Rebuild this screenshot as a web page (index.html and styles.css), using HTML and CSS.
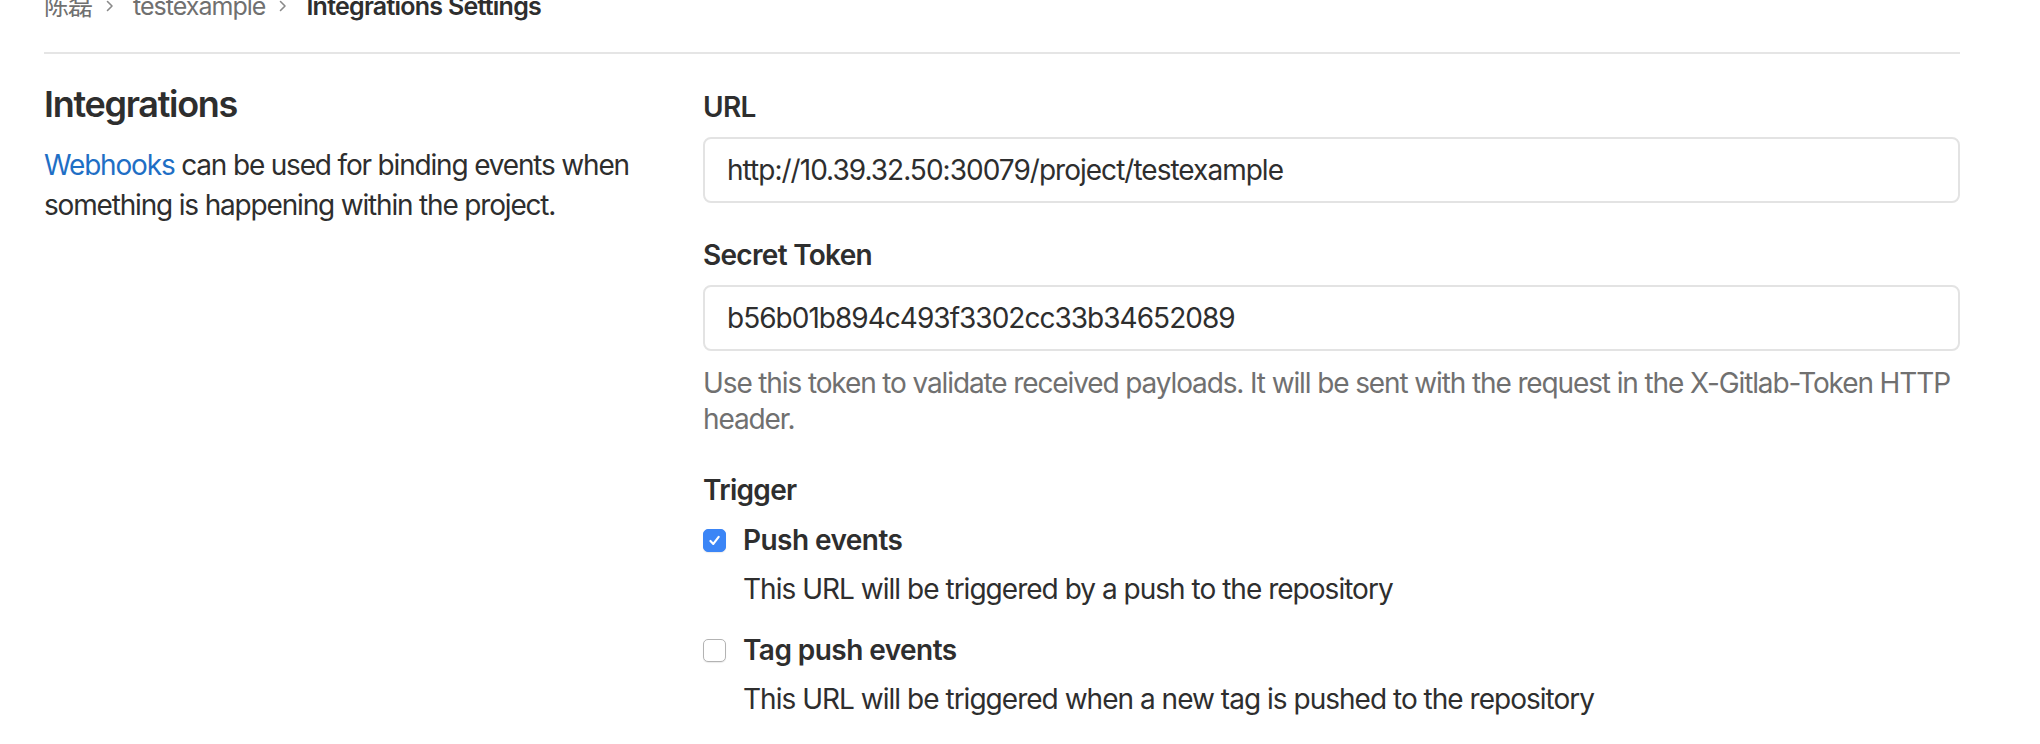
FILE: index.html
```html
<!DOCTYPE html>
<html lang="en">
<head>
<meta charset="utf-8">
<title>Integrations Settings</title>
<link rel="stylesheet" href="styles.css">
</head>
<body>
<div class="page">
  <nav class="crumbs">
    <span class="crumb">陈磊</span>
    <svg class="chev" width="10" height="16" viewBox="0 0 10 16"><path d="M2.5 3.5 L7 8 L2.5 12.5" fill="none" stroke="#8a8a8a" stroke-width="1.6" stroke-linecap="round" stroke-linejoin="round"/></svg>
    <span class="crumb">testexample</span>
    <svg class="chev" width="10" height="16" viewBox="0 0 10 16"><path d="M2.5 3.5 L7 8 L2.5 12.5" fill="none" stroke="#8a8a8a" stroke-width="1.6" stroke-linecap="round" stroke-linejoin="round"/></svg>
    <span class="crumb current">Integrations Settings</span>
  </nav>
  <div class="row">
    <div class="side">
      <h4 class="title">Integrations</h4>
      <p class="intro"><a href="#" class="link">Webhooks</a> can be used for binding events when something is happening within the project.</p>
    </div>
    <form class="main">
      <div class="group">
        <label class="label">URL</label>
        <div class="input">http://10.39.32.50:30079/project/testexample</div>
      </div>
      <div class="group">
        <label class="label">Secret Token</label>
        <div class="input">b56b01b894c493f3302cc33b34652089</div>
        <p class="help">Use this token to validate received payloads. It will be sent with the request in the X-Gitlab-Token HTTP header.</p>
      </div>
      <div class="trigger">
        <div class="label">Trigger</div>
        <div class="check-row">
          <span class="box checked"><svg width="15" height="15" viewBox="0 0 14 14"><path d="M3.2 7.4 L5.9 10.2 L10.9 3.6" fill="none" stroke="#fff" stroke-width="2" stroke-linecap="round" stroke-linejoin="round"/></svg></span>
          <span class="check-label">Push events</span>
        </div>
        <p class="check-help">This URL will be triggered by a push to the repository</p>
        <div class="check-row second">
          <span class="box"></span>
          <span class="check-label">Tag push events</span>
        </div>
        <p class="check-help">This URL will be triggered when a new tag is pushed to the repository</p>
      </div>
    </form>
  </div>
</div>
</body>
</html>
```

FILE: styles.css
```css
html, body {
  margin: 0;
  padding: 0;
  background: #ffffff;
}
body {
  font-family: Inter, "Noto Sans CJK SC", sans-serif;
  font-size: 28px;
  line-height: 40px;
  letter-spacing: -0.035em;
  color: #2e2e2e;
  overflow: hidden;
}
.page {
  padding: 0 80px 0 44px;
}
.crumbs {
  display: flex;
  align-items: center;
  margin-top: -14px;
  height: 40px;
  padding-bottom: 26px;
  border-bottom: 2px solid #e5e5e5;
  color: #707070;
}
.crumb {
  font-size: 25px;
}
.chev {
  margin: 0 18px 0 13px;
}
.crumb.current {
  color: #2e2e2e;
  font-weight: 600;
  letter-spacing: -0.03em;
}
.row {
  display: grid;
  grid-template-columns: 599px 1fr;
  column-gap: 60px;
  padding-top: 28px;
}
.title {
  margin: 0 0 19px;
  font-size: 36px;
  line-height: 44px;
  font-weight: 600;
  letter-spacing: -0.036em;
}
.intro {
  margin: 0;
  letter-spacing: -0.042em;
}
.link {
  color: #1f6fc5;
  text-decoration: none;
}
.main {
  padding-top: 5px;
  margin: 0;
}
.group {
  margin-bottom: 32px;
}
.label {
  display: block;
  font-weight: 600;
  letter-spacing: -0.025em;
  margin-bottom: 10px;
}
.input {
  box-sizing: border-box;
  height: 66px;
  border: 2px solid #e3e3e3;
  border-radius: 8px;
  padding: 0 22px;
  display: flex;
  align-items: center;
  font-size: 28px;
}
.help {
  margin: 14px 0 0;
  line-height: 36px;
  letter-spacing: -0.04em;
  color: #707070;
}
.trigger {
  padding-top: 1px;
}
.check-row {
  display: flex;
  align-items: center;
  gap: 17px;
}
.check-row.second {
  margin-top: 21px;
}
.box {
  box-sizing: border-box;
  width: 23px;
  height: 23px;
  border-radius: 5px;
  border: 1.5px solid #b3b3b3;
  background: #fff;
  box-shadow: 0 1px 1px rgba(0, 0, 0, 0.08);
  display: flex;
  align-items: center;
  justify-content: center;
  flex: none;
}
.box.checked {
  background: #3b85f6;
  border-color: #3b85f6;
}
.check-label {
  font-weight: 600;
  letter-spacing: -0.02em;
}
.check-help {
  margin: 9px 0 0 40px;
}
```
